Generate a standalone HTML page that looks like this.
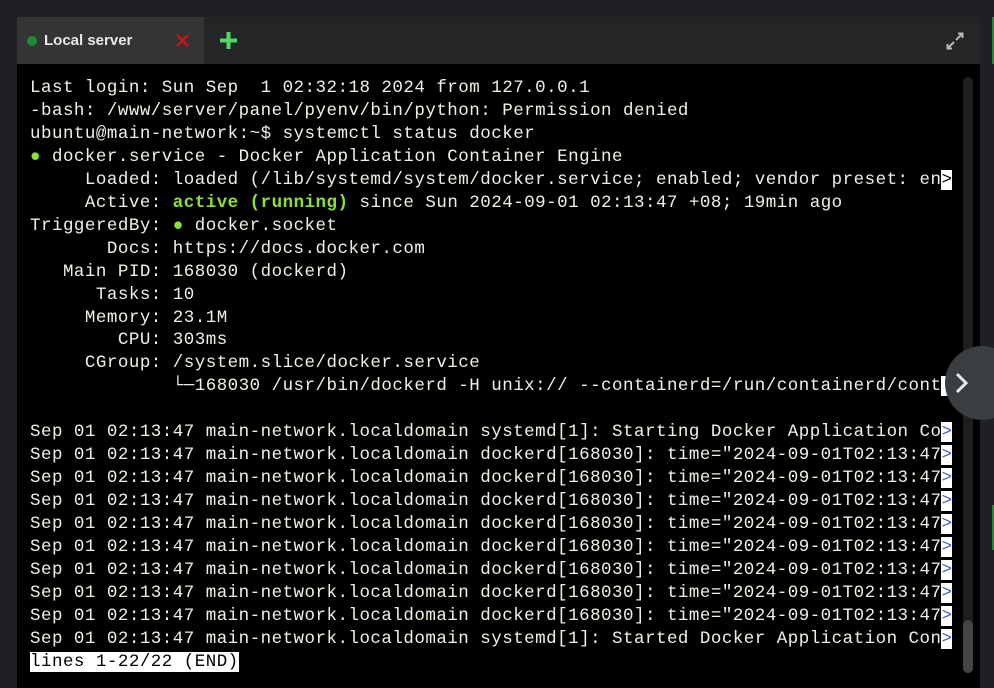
<!DOCTYPE html>
<html><head><meta charset="utf-8"><style>
html,body{margin:0;padding:0;width:994px;height:688px;overflow:hidden;background:#1f2023;font-family:"Liberation Sans",sans-serif}
.tabbar{position:absolute;left:17px;top:17px;width:963px;height:47px;background:#232526}
.tab{position:absolute;left:0;top:0;width:187px;height:47px;background:#323436}
.dot{position:absolute;left:10px;top:19px;width:10px;height:10px;border-radius:50%;background:#1c8a2e}
.tabt{position:absolute;left:27px;top:15px;color:#e8e8e8;font-size:15px;font-weight:bold}
.term{position:absolute;left:17px;top:64px;width:963px;height:624px;background:#000}
pre{position:absolute;left:30px;top:77px;margin:0;font-family:"Liberation Mono",monospace;font-size:17.5px;letter-spacing:0.48px;line-height:22.96px;color:#f2f0e4}
.g{color:#8ae234}.b{font-weight:bold}
.i{background:#fff;color:#000}
.ig{background:#fff;color:#4060c0}
.sb{position:absolute;left:963px;top:77px;width:10px;height:596px;border-radius:5px;background:#1e1e1e}
.th{position:absolute;left:963px;top:620px;width:10px;height:53px;border-radius:5px;background:#444}
.rs{position:absolute;left:980px;top:17px;width:14px;height:671px;background:#1f2023}
.arrow{position:absolute;left:945px;top:346px;width:74px;height:74px;border-radius:50%;background:#3b3e40}
</style></head><body>
<div class="tabbar">
 <div class="tab"><div class="dot"></div><div class="tabt">Local server</div>
  <svg style="position:absolute;left:158px;top:16px" width="15" height="15"><path d="M2 2L13 13M13 2L2 13" stroke="#d01010" stroke-width="2.5"/></svg></div>
 <svg style="position:absolute;left:202px;top:14px" width="19" height="19"><path d="M9.5 1V18M1 9.5H18" stroke="#4cd964" stroke-width="4"/></svg>
 <svg style="position:absolute;left:927px;top:13px" width="22" height="22"><path d="M12 10L18 4M14 3.5H18.5V8M10 12L4 18M3.5 14V18.5H8" stroke="#b8b8b8" stroke-width="2" fill="none"/></svg>
</div>
<div class="rs"></div>
<div style="position:absolute;left:992px;top:17px;width:2px;height:47px;background:#1c8a2e"></div>
<div style="position:absolute;left:992px;top:505px;width:2px;height:45px;background:#1c8a2e"></div>
<div class="term"></div>
<pre>Last login: Sun Sep  1 02:32:18 2024 from 127.0.0.1
-bash: /www/server/panel/pyenv/bin/python: Permission denied
ubuntu@main-network:~$ systemctl status docker
<span class="g">●</span> docker.service - Docker Application Container Engine
     Loaded: loaded (/lib/systemd/system/docker.service; enabled; vendor preset: en<span class="i">&gt;</span>
     Active: <span class="g b">active (running)</span> since Sun 2024-09-01 02:13:47 +08; 19min ago
TriggeredBy: <span class="g">●</span> docker.socket
       Docs: https://docs.docker.com
   Main PID: 168030 (dockerd)
      Tasks: 10
     Memory: 23.1M
        CPU: 303ms
     CGroup: /system.slice/docker.service
             └─168030 /usr/bin/dockerd -H unix:// --containerd=/run/containerd/cont<span class="i"> </span>

Sep 01 02:13:47 main-network.localdomain systemd[1]: Starting Docker Application Co<span class="ig">&gt;</span>
Sep 01 02:13:47 main-network.localdomain dockerd[168030]: time="2024-09-01T02:13:47<span class="ig">&gt;</span>
Sep 01 02:13:47 main-network.localdomain dockerd[168030]: time="2024-09-01T02:13:47<span class="ig">&gt;</span>
Sep 01 02:13:47 main-network.localdomain dockerd[168030]: time="2024-09-01T02:13:47<span class="ig">&gt;</span>
Sep 01 02:13:47 main-network.localdomain dockerd[168030]: time="2024-09-01T02:13:47<span class="ig">&gt;</span>
Sep 01 02:13:47 main-network.localdomain dockerd[168030]: time="2024-09-01T02:13:47<span class="ig">&gt;</span>
Sep 01 02:13:47 main-network.localdomain dockerd[168030]: time="2024-09-01T02:13:47<span class="ig">&gt;</span>
Sep 01 02:13:47 main-network.localdomain dockerd[168030]: time="2024-09-01T02:13:47<span class="ig">&gt;</span>
Sep 01 02:13:47 main-network.localdomain dockerd[168030]: time="2024-09-01T02:13:47<span class="ig">&gt;</span>
Sep 01 02:13:47 main-network.localdomain systemd[1]: Started Docker Application Con<span class="ig">&gt;</span>
<span class="i">lines 1-22/22 (END)</span></pre>
<div class="sb"></div><div class="th"></div>
<div class="arrow"><svg style="position:absolute;left:9px;top:26px" width="16" height="22"><path d="M3 2L12 11L3 20" stroke="#e8e8e8" stroke-width="3" fill="none"/></svg></div>
</body></html>
